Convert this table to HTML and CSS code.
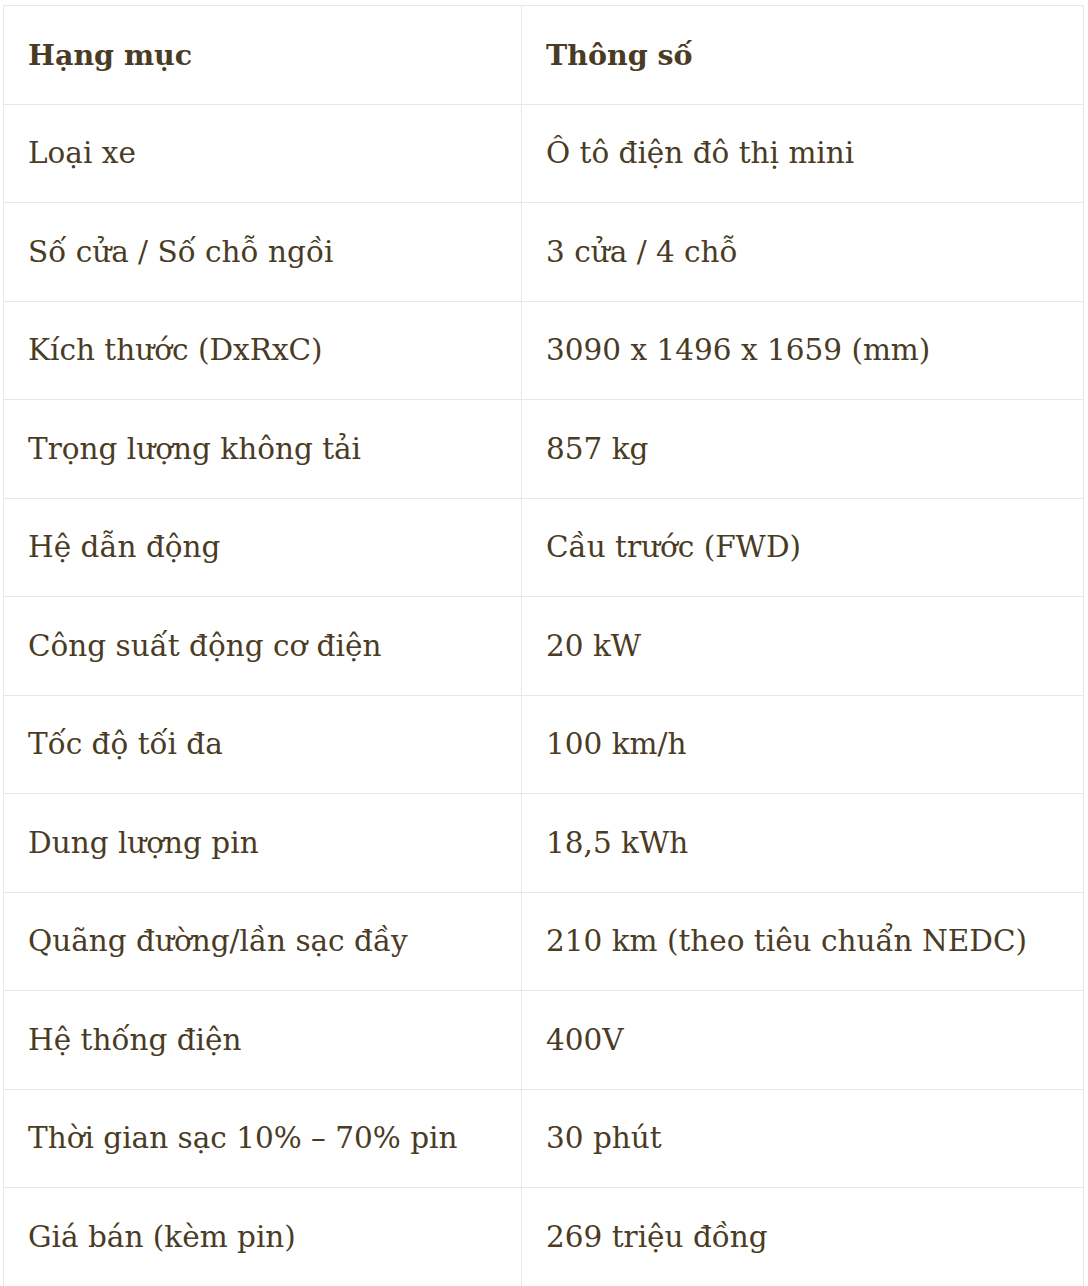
FILE: index.html
```html
<!DOCTYPE html>
<html lang="vi">
<head>
<meta charset="utf-8">
<link rel="stylesheet" href="styles.css">
</head>
<body>
<table class="spec">
  <thead>
    <tr><th class="col-a">Hạng mục</th><th>Thông số</th></tr>
  </thead>
  <tbody>
    <tr><td>Loại xe</td><td>Ô tô điện đô thị mini</td></tr>
    <tr><td>Số cửa / Số chỗ ngồi</td><td>3 cửa / 4 chỗ</td></tr>
    <tr><td>Kích thước (DxRxC)</td><td>3090 x 1496 x 1659 (mm)</td></tr>
    <tr><td>Trọng lượng không tải</td><td>857 kg</td></tr>
    <tr><td>Hệ dẫn động</td><td>Cầu trước (FWD)</td></tr>
    <tr><td>Công suất động cơ điện</td><td>20 kW</td></tr>
    <tr><td>Tốc độ tối đa</td><td>100 km/h</td></tr>
    <tr><td>Dung lượng pin</td><td>18,5 kWh</td></tr>
    <tr><td>Quãng đường/lần sạc đầy</td><td>210 km (theo tiêu chuẩn NEDC)</td></tr>
    <tr><td>Hệ thống điện</td><td>400V</td></tr>
    <tr><td>Thời gian sạc 10% – 70% pin</td><td>30 phút</td></tr>
    <tr><td>Giá bán (kèm pin)</td><td>269 triệu đồng</td></tr>
  </tbody>
</table>
</body>
</html>
```
FILE: styles.css
```css
html, body {
  margin: 0;
  padding: 0;
  background: #ffffff;
}
body {
  padding: 5px 5px 0 3px;
  font-family: "DejaVu Serif", "Liberation Serif", serif;
  color: #4a3b25;
}
.spec {
  width: 1081px;
  border-collapse: collapse;
  table-layout: fixed;
}
.spec th, .spec td {
  border: 1px solid #e8e8e8;
  text-align: left;
  padding: 0 24px;
  height: 97.5px;
  font-size: 29.5px;
  vertical-align: middle;
}
.spec th {
  font-weight: bold;
  font-size: 28.5px;
}
.col-a {
  width: 469px;
}
```
